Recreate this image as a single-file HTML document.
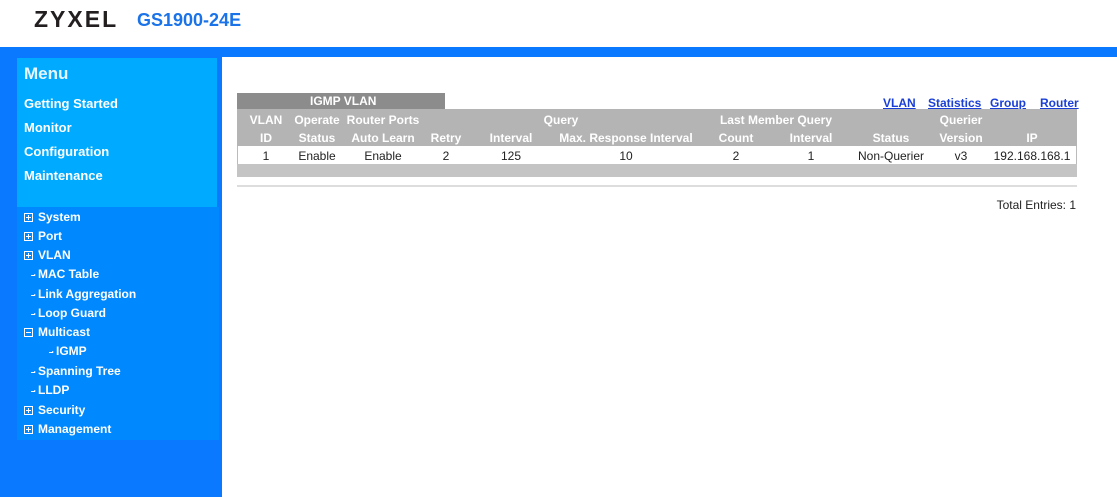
<!DOCTYPE html>
<html><head><style>
*{margin:0;padding:0;box-sizing:border-box}
body{width:1117px;height:497px;position:relative;background:#fff;font-family:"Liberation Sans",sans-serif;overflow:hidden}
.a{position:absolute;white-space:nowrap}
.c{transform:translateX(-50%)}
.hd{color:#fff;font-weight:bold;font-size:12px}
.d{color:#222;font-size:12px}
.m{color:#fff;font-weight:bold;font-size:13px;left:24px}
.t{color:#fff;font-weight:bold;font-size:12px}
.ar{position:absolute;left:31px;width:4px;height:1px;background:#fff}
.ar:after{content:"";position:absolute;right:-1px;top:-1px;border-left:2px solid #fff;border-top:1.5px solid transparent;border-bottom:1.5px solid transparent}
.box{display:inline-block;width:9px;height:9px;border:1px solid #fff;position:absolute;left:24px}
.box:before{content:"";position:absolute;left:1px;top:3px;width:5px;height:1px;background:#fff}
.box.p:after{content:"";position:absolute;left:3px;top:1px;width:1px;height:5px;background:#fff}
a{color:#1a3fd6;font-weight:bold;font-size:12px;text-decoration:underline}
</style></head><body>
<div class="a" style="left:34px;top:6px;font-size:23px;font-weight:bold;letter-spacing:2px;color:#231f20">ZYXEL</div>
<div class="a" style="left:137px;top:10px;font-size:18px;font-weight:bold;color:#1a73e8">GS1900-24E</div>
<div class="a" style="left:0;top:47px;width:1117px;height:450px;background:#0a78ff"></div>
<div class="a" style="left:222px;top:57px;width:895px;height:440px;background:#fff"></div>
<div class="a" style="left:17px;top:58px;width:200px;height:149px;background:#00aaff"></div>
<div class="a" style="left:17px;top:207px;width:202px;height:233px;background:#0088ff"></div>
<div class="a" style="left:24px;top:64px;color:#e8f6ff;font-weight:bold;font-size:17px">Menu</div>
<div class="a m" style="top:96px">Getting Started</div>
<div class="a m" style="top:120px">Monitor</div>
<div class="a m" style="top:144px">Configuration</div>
<div class="a m" style="top:168px">Maintenance</div>
<span class="box p" style="top:213px"></span><div class="a t" style="left:38px;top:210px">System</div>
<span class="box p" style="top:232px"></span><div class="a t" style="left:38px;top:229px">Port</div>
<span class="box p" style="top:251px"></span><div class="a t" style="left:38px;top:248px">VLAN</div>
<span class="ar" style="top:275px"></span><div class="a t" style="left:38px;top:267px">MAC Table</div>
<span class="ar" style="top:295px"></span><div class="a t" style="left:38px;top:287px">Link Aggregation</div>
<span class="ar" style="top:314px"></span><div class="a t" style="left:38px;top:306px">Loop Guard</div>
<span class="box" style="top:328px"></span><div class="a t" style="left:38px;top:325px">Multicast</div>
<span class="ar" style="top:352px;left:49px"></span><div class="a t" style="left:56px;top:344px">IGMP</div>
<span class="ar" style="top:372px"></span><div class="a t" style="left:38px;top:364px">Spanning Tree</div>
<span class="ar" style="top:391px"></span><div class="a t" style="left:38px;top:383px">LLDP</div>
<span class="box p" style="top:406px"></span><div class="a t" style="left:38px;top:403px">Security</div>
<span class="box p" style="top:425px"></span><div class="a t" style="left:38px;top:422px">Management</div>

<div class="a" style="left:237px;top:93px;width:208px;height:16px;background:#8c8c8c"></div>
<div class="a hd" style="left:310px;top:94px">IGMP VLAN</div>
<div class="a" style="left:883px;top:94px"><a>VLAN</a></div>
<div class="a" style="left:928px;top:94px"><a>Statistics</a></div>
<div class="a" style="left:990px;top:94px"><a>Group</a></div>
<div class="a" style="left:1040px;top:94px"><a>Router</a></div>
<div class="a" style="left:237px;top:109px;width:840px;height:37px;background:#b4b4b4"></div>
<div class="a" style="left:237px;top:146px;width:840px;height:18px;background:#fff;border-left:1px solid #bbb;border-right:1px solid #bbb"></div>
<div class="a" style="left:237px;top:164px;width:840px;height:13px;background:#c4c4c4"></div>
<div class="a" style="left:237px;top:185px;width:840px;height:2px;background:#ddd"></div>
<div class="a hd c" style="left:266px;top:113px">VLAN</div>
<div class="a hd c" style="left:317px;top:113px">Operate</div>
<div class="a hd c" style="left:383px;top:113px">Router Ports</div>
<div class="a hd c" style="left:561px;top:113px">Query</div>
<div class="a hd c" style="left:776px;top:113px">Last Member Query</div>
<div class="a hd c" style="left:961px;top:113px">Querier</div>
<div class="a hd c" style="left:266px;top:131px">ID</div>
<div class="a hd c" style="left:317px;top:131px">Status</div>
<div class="a hd c" style="left:383px;top:131px">Auto Learn</div>
<div class="a hd c" style="left:446px;top:131px">Retry</div>
<div class="a hd c" style="left:511px;top:131px">Interval</div>
<div class="a hd c" style="left:626px;top:131px">Max. Response Interval</div>
<div class="a hd c" style="left:736px;top:131px">Count</div>
<div class="a hd c" style="left:811px;top:131px">Interval</div>
<div class="a hd c" style="left:891px;top:131px">Status</div>
<div class="a hd c" style="left:961px;top:131px">Version</div>
<div class="a hd c" style="left:1032px;top:131px">IP</div>
<div class="a d c" style="left:266px;top:149px">1</div>
<div class="a d c" style="left:317px;top:149px">Enable</div>
<div class="a d c" style="left:383px;top:149px">Enable</div>
<div class="a d c" style="left:446px;top:149px">2</div>
<div class="a d c" style="left:511px;top:149px">125</div>
<div class="a d c" style="left:626px;top:149px">10</div>
<div class="a d c" style="left:736px;top:149px">2</div>
<div class="a d c" style="left:811px;top:149px">1</div>
<div class="a d c" style="left:891px;top:149px">Non-Querier</div>
<div class="a d c" style="left:961px;top:149px">v3</div>
<div class="a d c" style="left:1032px;top:149px">192.168.168.1</div>
<div class="a d" style="right:41px;top:198px">Total Entries: 1</div>
</body></html>
